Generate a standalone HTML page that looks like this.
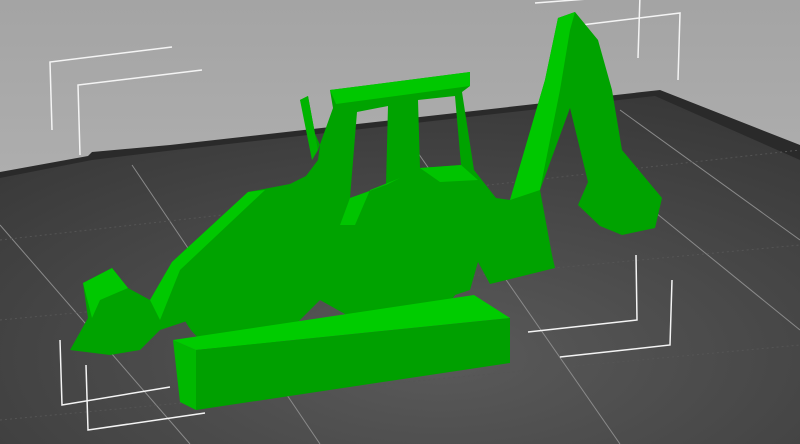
<!DOCTYPE html>
<html><head><meta charset="utf-8"><style>
html,body{margin:0;padding:0;width:800px;height:444px;overflow:hidden;background:#a9a9a9}
svg{display:block}
</style></head><body>
<svg width="800" height="444" viewBox="0 0 800 444" xmlns="http://www.w3.org/2000/svg">
<defs>
<linearGradient id="sky" x1="0" y1="0" x2="0" y2="1">
<stop offset="0" stop-color="#a4a4a4"/><stop offset="1" stop-color="#bdbdbd"/></linearGradient>
<radialGradient id="bed" cx="0.55" cy="0.75" r="0.8">
<stop offset="0" stop-color="#5a5a5a"/><stop offset="1" stop-color="#383838"/></radialGradient>
</defs>
<rect width="800" height="444" fill="url(#sky)"/>
<polygon points="0,172 88,156 92,152 170,145 660,90 800,145 800,444 0,444" fill="#2a2a2a"/>
<polygon points="0,178 92,160 175,150 655,96 800,160 800,444 0,444" fill="url(#bed)"/>
<g stroke="#8a8a8a" stroke-width="1" fill="none">
<line x1="132" y1="165" x2="320" y2="444"/>
<line x1="400" y1="127" x2="620" y2="444"/>
<line x1="0" y1="225" x2="190" y2="444"/>
<line x1="620" y1="110" x2="800" y2="240"/>
<line x1="640" y1="200" x2="800" y2="330"/>
<line x1="0" y1="240" x2="800" y2="150" stroke="#555" stroke-dasharray="2,3"/>
<line x1="0" y1="320" x2="800" y2="245" stroke="#555" stroke-dasharray="2,3"/>
<line x1="0" y1="420" x2="800" y2="345" stroke="#555" stroke-dasharray="2,3"/>
</g>
<g stroke="#f4f4f4" stroke-width="1.5" fill="none">
<polyline points="52,130 50,62 172,47"/>
<polyline points="80,155 78,85 202,70"/>
<polyline points="565,27 680,13 678,80"/>
<polyline points="535,3 640,-5 638,58"/>
<polyline points="60,340 62,405 170,387"/>
<polyline points="86,365 88,430 205,413"/>
<polyline points="636,255 637,320 528,332"/>
<polyline points="672,280 670,345 560,357"/>
</g>
<!-- body -->
<g fill="#00a300">
<circle cx="240" cy="292" r="62"/>
<circle cx="405" cy="262" r="60"/>
<path fill-rule="evenodd" d="M70,350 L88,318 L83,283 L112,268 L128,288 L150,300 L172,262 L248,192 L290,184 L306,176 L318,160 L320,145 L300,100 L308,96 L318,150 L333,108 L330,90 L470,72 L470,86 L462,92 L474,170 L496,198 L510,200 L545,80 L558,18 L575,12 L598,40 L612,90 L622,150 L662,198 L655,228 L622,235 L600,226 L578,205 L588,182 L570,108 L540,190 L552,255 L555,268 L490,284 L478,262 L470,290 L440,300 L400,322 L352,318 L320,300 L290,330 L255,350 L220,345 L190,320 L160,330 L140,350 L110,355 Z
M357,112 L388,106 L386,185 L350,198 Z
M418,100 L455,96 L461,165 L420,168 Z"/>
</g>
<!-- highlights -->
<path fill="#00c800" d="M330,90 L470,72 L470,86 L336,104 Z"/>
<path fill="#00c800" d="M545,80 L558,18 L575,12 L570,30 L560,90 L540,190 L510,200 Z"/>
<path fill="#00c800" d="M248,192 L265,190 L180,270 L160,320 L150,300 L172,262 Z"/>
<path fill="#00c800" d="M83,283 L112,268 L128,288 L100,300 L92,318 Z"/>
<path fill="#00c400" d="M350,198 L386,185 L400,178 L370,190 L355,225 L340,225 Z"/>
<path fill="#00c400" d="M420,168 L461,165 L478,180 L440,182 Z"/>
<path fill="#00b400" d="M300,100 L308,96 L318,150 L312,160 Z"/>
<!-- base block -->
<polygon points="173,340 196,350 196,410 180,402" fill="#00b800"/>
<polygon points="173,340 474,295 510,318 196,350" fill="#00cc00"/>
<polygon points="196,350 510,318 510,363 196,410" fill="#00a000"/>
</svg>
</body></html>
